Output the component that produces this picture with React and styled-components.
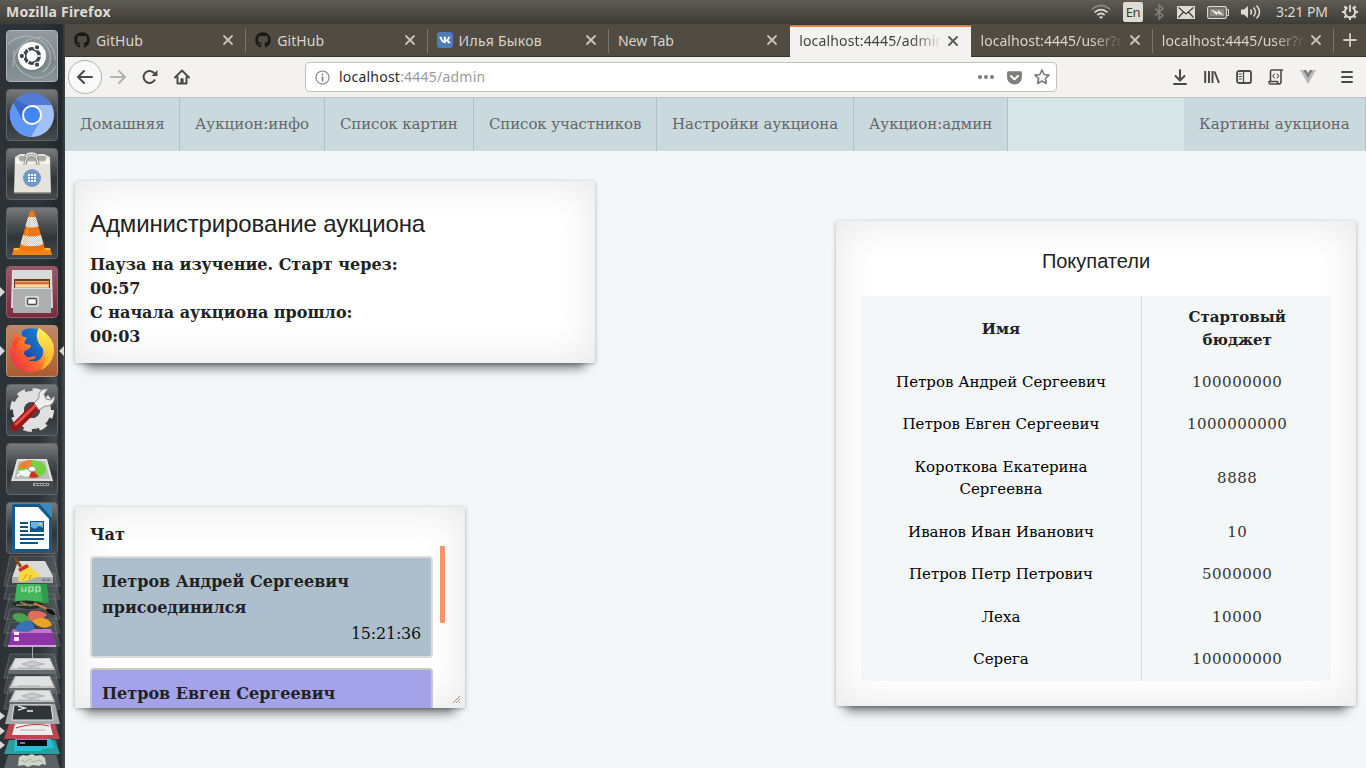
import React from "react";
import styled, { createGlobalStyle, css } from "styled-components";
import { FaGithub, FaVk, FaGetPocket } from "react-icons/fa";

const GlobalStyle = createGlobalStyle`
  * { box-sizing: border-box; }
  body { margin: 0; overflow: hidden; }
`;

const ui = `"Noto Sans", "Open Sans", sans-serif`;
const serif = `"DejaVu Serif", serif`;

const Desktop = styled.div`
  width: 1366px;
  height: 768px;
  display: flex;
  flex-direction: column;
  overflow: hidden;
  font-family: ${ui};
  background: #f3f7f8;
`;

/* ---------- top panel ---------- */
const Panel = styled.header`
  height: 24px;
  flex: none;
  display: flex;
  align-items: center;
  justify-content: space-between;
  padding: 0 7px 0 6px;
  background: linear-gradient(#625f51 0, #5a5850 2px, #3e3c38 100%);
  color: #dfdbd2;
`;
const PanelTitle = styled.span`
  font-size: 14px;
  font-weight: 700;
  line-height: 24px;
  letter-spacing: 0.22px;
`;
const Indicators = styled.div`
  display: flex;
  align-items: center;
  height: 24px;
`;
const Indicator = styled.span`
  display: flex;
  justify-content: center;
  align-items: center;
  width: ${(p) => p.$w}px;
  margin-left: ${(p) => p.$gap || 0}px;
  height: 24px;
`;
const Keyboard = styled.span`
  width: 20px;
  height: 20px;
  margin-left: 12px;
  margin-bottom: 1px;
  border-radius: 2px;
  background: #dfdbd2;
  color: #3c3b37;
  font-size: 13px;
  line-height: 20px;
  text-align: center;
  letter-spacing: -0.5px;
`;
const Clock = styled.span`
  width: 54px;
  margin-left: 15px;
  font-size: 14px;
  line-height: 24px;
  letter-spacing: -0.1px;
  white-space: nowrap;
`;

/* ---------- launcher ---------- */
const Main = styled.div`
  flex: 1;
  display: flex;
  min-height: 0;
`;
const Launcher = styled.aside`
  width: 65px;
  flex: none;
  display: flex;
  flex-direction: column;
  align-items: center;
  padding: 6px 1px 0 0;
  gap: 7px;
  overflow: hidden;
  background:
    linear-gradient(90deg, transparent 60%, rgba(150, 160, 165, 0.28) 86%, rgba(40, 45, 48, 0.6) 91%, rgba(90, 98, 102, 0.5) 100%) 0 330px / 100% 100% no-repeat,
    linear-gradient(90deg, #2c3235 0, #2d3437 60%, #22292c 94%, #3b4244 100%);
`;
const Tile = styled.div`
  position: relative;
  width: 52px;
  height: 52px;
  flex: none;
  border: 1px solid ${(p) => p.$edge || "#5f676b"};
  border-radius: 4px;
  background: ${(p) => p.$bg || "linear-gradient(#777a7b 0, #4a4e50 35%, #303538 60%, #454b4e 100%)"};
  svg { display: block; margin: -1px; }
`;
const Pip = styled.i`
  position: absolute;
  top: 20px;
  border: 5px solid transparent;
  ${(p) =>
    p.$right
      ? css`right: -7px; border-right-color: #d8d8d8; border-left: 0;`
      : css`left: -7px; border-left-color: #d8d8d8; border-right: 0;`}
`;
const Stack = styled.div`
  width: 65px;
  height: 214px;
  margin: -7px -1px 0 0;
  flex: none;
  svg { display: block; }
`;

/* ---------- browser chrome ---------- */
const Browser = styled.main`
  flex: 1;
  min-width: 0;
  display: flex;
  flex-direction: column;
`;
const TabBar = styled.div`
  height: 33px;
  flex: none;
  display: flex;
  background: #504c44;
  border-bottom: 1px solid #37332e;
`;
const TabBox = styled.div`
  position: relative;
  width: 181.3px;
  height: ${(p) => (p.$active ? 33 : 32)}px;
  flex: none;
  display: flex;
  align-items: center;
  padding: 0 12px 0 9px;
  color: ${(p) => (p.$active ? "#45433f" : "#d9d4c9")};
  background: ${(p) => (p.$active ? "#f4f2f0" : "transparent")};
  border-top: ${(p) => (p.$active ? "1px solid #37332e" : "0")};
  box-shadow: ${(p) => (p.$active ? "inset 0 2px #f17a4d" : "none")};
  &::after {
    content: "";
    position: absolute;
    right: 0;
    top: 5px;
    width: 1px;
    height: 24px;
    background: ${(p) => (p.$line ? "#7b776e" : "transparent")};
  }
`;
const TabLabel = styled.span`
  flex: 1;
  min-width: 0;
  margin-left: ${(p) => (p.$icon ? 6 : 0)}px;
  margin-top: ${(p) => (p.$active ? 0 : 1)}px;
  overflow: hidden;
  white-space: nowrap;
  font-size: 14px;
  line-height: 22px;
  letter-spacing: ${(p) => p.$track || 0}px;
  ${(p) => p.$fade && css`mask-image: linear-gradient(90deg, #000 112px, transparent 144px);`}
`;
const Close = styled.svg`
  flex: none;
  margin-left: 5px;
`;
const VkIcon = styled.span`
  width: 16px;
  height: 16px;
  display: flex;
  align-items: center;
  justify-content: center;
  border-radius: 3px;
  background: #4d7db8;
  color: #fff;
`;
const NewTab = styled.div`
  flex: 1;
  display: flex;
  align-items: center;
  justify-content: center;
`;
const Toolbar = styled.div`
  height: 41px;
  flex: none;
  display: flex;
  align-items: center;
  padding: 0 3px;
  background: #f4f2f0;
  border-bottom: 1px solid #c6c3bf;
`;
const ToolButton = styled.span`
  width: 32px;
  height: 32px;
  flex: none;
  display: flex;
  align-items: center;
  justify-content: center;
`;
const BackButton = styled(ToolButton)`
  width: 34px;
  height: 34px;
  border: 1px solid #b3b0ad;
  border-radius: 50%;
  background: #fbfafa;
`;
const Address = styled.div`
  width: 752px;
  height: 30px;
  flex: none;
  margin: 0 107px;
  display: flex;
  align-items: center;
  padding: 0 0 0 9px;
  border: 1px solid #c4c1bd;
  border-radius: 4px;
  background: #fff;
`;
const Url = styled.span`
  flex: 1;
  margin-left: 9px;
  font-size: 14px;
  line-height: 28px;
  color: #9b9b9b;
  letter-spacing: 0.22px;
  b { font-weight: 400; color: #2c2c2c; }
`;
const AddressAction = styled.span`
  width: 28px;
  display: flex;
  justify-content: center;
`;
const Separator = styled.i`
  width: 1px;
  height: 34px;
  margin: 0 4px 0 3px;
  background: #d2d0cd;
`;

/* ---------- web page ---------- */
const Nav = styled.nav`
  height: 53px;
  flex: none;
  display: flex;
  background: #d6e6e6;
`;
const NavItem = styled.a`
  width: ${(p) => p.$w}px;
  height: 53px;
  flex: none;
  padding: 0 0 0 15px;
  border-right: 1px solid #adc1d0;
  background: #cad9de;
  color: #666;
  font-family: ${serif};
  font-size: 15px;
  line-height: 53px;
  white-space: nowrap;
  letter-spacing: ${(p) => p.$track || 0}px;
`;
const NavSpace = styled.div`flex: 1;`;
const Page = styled.div`
  flex: 1;
  display: flex;
  justify-content: space-between;
  align-items: flex-start;
  padding: 30px 10px 0;
  background: #f3f7f8;
  font-family: ${serif};
  color: #222;
`;
const LeftColumn = styled.div`
  display: flex;
  flex-direction: column;
  gap: 144px;
`;
const Card = styled.section`
  background: #fff;
  box-shadow:
    0 15px 10px -10px rgba(0, 0, 0, 0.5),
    0 1px 4px rgba(0, 0, 0, 0.3),
    0 0 40px rgba(0, 0, 0, 0.1) inset;
`;
const AdminCard = styled(Card)`
  width: 520px;
  height: 182px;
  padding: 26px 15px 0;
`;
const Title = styled.h1`
  margin: 0 0 12px;
  font: 400 24px/34px "Liberation Sans", sans-serif;
  letter-spacing: -0.12px;
`;
const Timer = styled.div`
  font-size: 16px;
  font-weight: 700;
  line-height: 24px;
`;
const BuyersCard = styled(Card)`
  width: 520px;
  height: 485px;
  margin-top: 40px;
  padding: 25px;
`;
const Subtitle = styled.h2`
  margin: 0 0 20px;
  font: 400 20px/30px "Liberation Sans", sans-serif;
  text-align: center;
`;
const Table = styled.div`
  background: #f3f7f8;
  font-size: 15px;
  line-height: 22.5px;
  text-align: center;
`;
const Row = styled.div`
  display: grid;
  grid-template-columns: 280px 190px;
  height: ${(p) => (p.$head ? "64.9px" : "auto")};
  font-weight: ${(p) => (p.$head ? 700 : 400)};
`;
const Cell = styled.div`
  display: flex;
  align-items: center;
  justify-content: center;
  padding: ${(p) => (p.$head ? "11.5px 30px 10px" : "10px 30px")};
  color: ${(p) => (p.$head ? "#222" : "#000")};
`;
const Budget = styled(Cell)`
  padding: 10px 30px 10px 31.4px;
  border-left: 1px solid #d5dadb;
  color: ${(p) => (p.$head ? "#222" : "#333")};
  letter-spacing: ${(p) => (p.$head ? 0 : 0.5)}px;
`;
const ChatCard = styled(Card)`
  position: relative;
  width: 390px;
  height: 201px;
  padding: 16px 20px 0 15px;
`;
const ChatTitle = styled.div`
  height: 23px;
  font-size: 16px;
  font-weight: 700;
  line-height: 24px;
`;
const ChatScroll = styled.div`
  height: 162px;
  display: flex;
  justify-content: space-between;
  overflow: hidden;
`;
const Messages = styled.div`
  width: 343px;
  padding-top: 10px;
  display: flex;
  flex-direction: column;
  gap: 10px;
`;
const Message = styled.div`
  flex: none;
  height: 102px;
  padding: 11px 10px 9px;
  border: 2px solid ${(p) => p.$edge};
  border-radius: 4px;
  background: ${(p) => p.$bg};
  font-size: 16px;
  font-weight: 700;
  line-height: 26px;
`;
const Time = styled.div`
  font-weight: 400;
  color: #111;
  letter-spacing: -0.22px;
  text-align: right;
`;
const Thumb = styled.i`
  width: 5px;
  height: 77px;
  border-radius: 1px;
  background: #f5936b;
`;
const Grip = styled.svg`
  position: absolute;
  right: 4px;
  bottom: 4px;
`;

/* ---------- launcher drawings ---------- */
const TileSvg = ({ children }) => (
  <svg width="52" height="52" viewBox="0 0 52 52">{children}</svg>
);

const Dash = () => (
  <TileSvg>
    <g fill="none" stroke="#c3cacc" strokeWidth="1.2" opacity=".6">
      <path d="M2 14C14 2 34 4 42 18c5 10 2 20-6 24" />
      <path d="M7 38C6 22 16 8 34 7c10 3 15 13 15 23" />
      <path d="M8 20c-2 14 6 25 22 28 10 0 16-5 20-12" />
    </g>
    <circle cx="26" cy="27.500" r="14" fill="#58656a" opacity=".5" />
    <circle cx="26" cy="26" r="14" fill="#fff" />
    <circle cx="26" cy="26" r="7.200" fill="none" stroke="#3f4649" strokeWidth="3.600" />
    <g stroke="#fff" strokeWidth="1.300"><path d="M26 26l-7-11M26 26l-7 11M26 26h14" /></g>
    <circle cx="26" cy="26" r="5.400" fill="#fff" />
    <g fill="#3f4649" stroke="#fff" strokeWidth="1.100">
      <circle cx="15.800" cy="26" r="2.700" /><circle cx="31" cy="17.300" r="2.700" /><circle cx="31" cy="34.700" r="2.700" />
    </g>
  </TileSvg>
);

const Chromium = () => (
  <TileSvg>
    <circle cx="26" cy="26" r="22" fill="#a1c1f8" />
    <path d="M26 26L7.500 14A22 22 0 0 0 25 48l9-16z" fill="#5e97f6" />
    <path d="M7.500 14A22 22 0 0 1 45.500 16H26L16 30z" fill="#3e66c5" />
    <path d="M10 11A22 22 0 0 1 45.500 16H20z" fill="#5b83da" opacity=".75" />
    <circle cx="26" cy="26" r="10" fill="#fff" />
    <circle cx="26" cy="26" r="8" fill="#4285f4" />
  </TileSvg>
);

const Software = () => (
  <TileSvg>
    <path d="M9 9l5-3h24l6 3 1 36H8z" fill="#e5e4dc" />
    <path d="M9 13l5-5h25l5 5z" fill="#aaa9a0" />
    <path d="M9 13l3-4 3 6h23l3-6 3 4v3H9z" fill="#f6f5ef" />
    <path d="M8 44h37v1.500H8z" fill="#9d9c94" />
    <path d="M19 17c0-13 13-13 13 0M20 9c0-5 11-5 11 0" fill="none" stroke="#82847f" strokeWidth="3.200" />
    <path d="M19 17c0-13 13-13 13 0M20 9c0-5 11-5 11 0" fill="none" stroke="#e2e4de" strokeWidth="1.400" />
    <circle cx="26" cy="30" r="9" fill="#7097c5" />
    <path d="M22 26h2v2h-2zm3 0h2v2h-2zm3 0h2v2h-2zm-6 3h2v2h-2zm3 0h2v2h-2zm3 0h2v2h-2zm-6 3h2v2h-2zm3 0h2v2h-2zm3 0h2v2h-2z" fill="#fff" />
  </TileSvg>
);

const Vlc = () => (
  <TileSvg>
    <defs>
      <pattern id="mesh" width="2" height="2" patternUnits="userSpaceOnUse">
        <path d="M0 0h2v2H0z" fill="#f2f3f3" /><path d="M0 0h1v1H0zM1 1h1v1H1z" fill="#c3c7c9" />
      </pattern>
    </defs>
    <path d="M8 41h36l2 7H6z" fill="#f58712" />
    <path d="M8 41h36l.5 2h-37z" fill="#ffb040" />
    <path d="M24 4c1-1 3-1 4 0l11 38c-4 4-22 4-26 0z" fill="#ee7510" />
    <path d="M22.200 10h7.600l2.800 9c-4 2-9 2-13.200 0zM17 28c6 2 12 2 18 0l2.400 9c-6 3-17 3-22.800 0z" fill="url(#mesh)" />
    <path d="M25 4l-4 36h-5z" fill="#ffb85c" opacity=".3" />
  </TileSvg>
);

const Files = () => (
  <TileSvg>
    <path d="M6 4h40l1 38H5z" fill="#d9dbda" />
    <path d="M8 13h36v10H8z" fill="#6f3827" />
    <path d="M9 15h34v8H9z" fill="#eab26f" />
    <path d="M9 16h34v2H9z" fill="#ce6d35" />
    <path d="M10 19h32v2H10z" fill="#f6dca6" />
    <path d="M7 22h38v25H7z" fill="#adafaf" />
    <path d="M7 22h38v1H7z" fill="#dedede" />
    <rect x="19" y="30" width="14" height="11" rx="2" fill="#dadada" />
    <rect x="21.500" y="32.500" width="9" height="6" rx="1" fill="#f8f8f8" stroke="#4e4e4e" strokeWidth="1.400" />
  </TileSvg>
);

const Firefox = () => (
  <TileSvg>
    <defs>
      <linearGradient id="fox" x1="1" y1=".1" x2="0" y2=".8">
        <stop offset="0" stopColor="#ffe93f" /><stop offset=".3" stopColor="#ffb52b" />
        <stop offset=".58" stopColor="#ff6a2b" /><stop offset="1" stopColor="#ee2c4c" />
      </linearGradient>
      <linearGradient id="globe" x1="0" y1="1" x2="1" y2="0">
        <stop offset="0" stopColor="#1d3f9c" /><stop offset="1" stopColor="#1190e8" />
      </linearGradient>
      <linearGradient id="flame" x1="0" y1="0" x2="0" y2="1">
        <stop offset="0" stopColor="#fff353" /><stop offset="1" stopColor="#ffa62a" />
      </linearGradient>
    </defs>
    <path d="M16 6c6-4 15-3 19 0l5 12-3 18H16z" fill="url(#globe)" />
    <path d="M7 8c3 1 5 3 6 4 3-1 6 0 8 1-2 2-3 4-2 6l6 1c0 4-4 4-7 7 0 4 3 6 7 5l4-1c1 1 0 4-7 4 7 4 15 0 15-8 1-5-1-9-3-12L45 14c6 13 0 26-11 31C21 51 4 43 4 26c0-5 2-8 4-11-1-2-1-5-1-7z" fill="url(#fox)" />
    <path d="M33 3c8 5 16 12 15 24-1 9-6 15-13 18 4-6 7-13 3-20-6-6-10-15-5-22z" fill="url(#flame)" />
    <path d="M8 15c2-2 4-3 7-2-4 3-7 11-4 18-3-2-5-10-3-16z" fill="#f04438" opacity=".7" />
  </TileSvg>
);

const Settings = () => (
  <TileSvg>
    <circle cx="26" cy="26" r="13.500" fill="none" stroke="#e0e0e0" strokeWidth="11" />
    <circle cx="26" cy="26" r="19.500" fill="none" stroke="#e0e0e0" strokeWidth="5" strokeDasharray="8 7.315" />
    <circle cx="26" cy="26" r="8" fill="#41474a" />
    <path d="M6 40l22-22 6 6-22 22c-5 3-10-2-6-6z" fill="#9e1717" />
    <path d="M8 40l21-20 2 2L10 42z" fill="#e05048" />
    <path d="M28 19l5-5c-1-6 3-10 9-9l-4 5 2 5 5 1 3-4c2 5-3 11-9 10l-6 4z" fill="#eeeeed" stroke="#85898a" />
  </TileSvg>
);

const Disks = () => (
  <TileSvg>
    <path d="M11 16h30l6 22v6H5v-6z" fill="#e1e2e0" />
    <path d="M5 38h42v7H5z" fill="#45494a" />
    <path d="M13 18h26l5 18H8z" fill="#b9bdbb" />
    <ellipse cx="26" cy="26" rx="14" ry="9" fill="#74d23e" />
    <path d="M26 26L12 25c1-5 6-8 13-8z" fill="#f28033" />
    <path d="M26 26l7 8c-4 1-8 1-11 0z" fill="#d92c27" />
    <path d="M26 26l-3 8c-6 0-10-3-11-6z" fill="#f4f4f2" />
    <ellipse cx="26" cy="26" rx="4" ry="2.500" fill="#fff" stroke="#999" />
    <path d="M11 33l10-6" stroke="#fff" strokeWidth="2" />
    <path d="M27 40h16v3H27z" fill="#9b9f9f" />
    <path d="M29 41.500h13" stroke="#333" strokeDasharray="2 1" />
  </TileSvg>
);

const Writer = () => (
  <TileSvg>
    <path d="M6 4q0-2 2-2h26l12 12v34q0 2-2 2H8q-2 0-2-2z" fill="#155a8d" />
    <path d="M34 2h12v14z" fill="#3a8abd" />
    <path d="M9 5h23l11 12v30H9z" fill="#fff" />
    <g fill="#0f5688">
      <path d="M14 20h8v2h-8zm0 4h8v2h-8zm0 4h8v2h-8zm0 4h24v2H14zm0 4h24v2H14zm0 4h18v2H14z" />
      <path d="M24 19h14v11H24z" />
    </g>
    <path d="M25 20h12v6l-4-2-4 3-4-2z" fill="#68b2dd" />
    <circle cx="34.500" cy="22" r="1.300" fill="#ffd24c" />
  </TileSvg>
);

const Folded = () => (
  <svg width="65" height="214" viewBox="0 554 65 214">
    <g fill="#7b8285" fillOpacity=".22" stroke="#90989b" strokeOpacity=".4">
      <path d="M10 556h44l6 30H4zM10 573h44l6 26H4zM10 594h44l6 25H4zM10 609h44l6 24H4zM10 622h44l6 24H4zM10 654h44l6 24H4zM10 666h44l6 27H4zM10 681h44l6 28H4z" />
    </g>
    <path d="M18 561h27l8 15v6H12v-4z" fill="#d9dad9" />
    <path d="M12 577h41v6H12z" fill="#aaadad" />
    <path d="M41 580h10M44 578v4M48 578v4" stroke="#777" />
    <path d="M15 558l8 12" stroke="#8a4a16" strokeWidth="3" />
    <path d="M20 567l7-3 14 12c-8 1-13 7-23 5z" fill="#f6da3d" />
    <path d="M18 569l9-5 2 3-9 5z" fill="#cd3029" />
    <path d="M27 574l-4 6M31 575l-2 5" stroke="#b99512" />
    <path d="M17 584h30l2 19H14z" fill="#2e9b4b" />
    <path d="M17 584h23l3 17H15z" fill="#44b65b" />
    <path d="M22 587v4h4v-4m3 6v-6h4v4h-4m7 2v-6h4v4h-4" fill="none" stroke="#bfe5c4" strokeWidth="1.200" />
    <path d="M12 603c7-4 24-3 31 1l-5 4c-8 2-18 1-26-4z" fill="#25292a" />
    <path d="M16 605h20M20 602l11 4" stroke="#8b8059" strokeWidth="1.500" />
    <path d="M34 603l15 7" stroke="#cb7937" strokeWidth="2" />
    <path d="M46 609c5-1 8 3 10 6-5 0-9-2-10-6z" fill="#0f1213" />
    <path d="M12 629h40l4 18H8z" fill="#8d35a6" />
    <path d="M13 629h38l1 4H12z" fill="#bf78ca" />
    <path d="M14 632h5v3h-5zm0 5h5v4h-5z" fill="#f2e9f4" />
    <path d="M8 645h48v2H8z" fill="#d3a2dc" />
    <path d="M31 621c-3-7-14-11-19-5 3 6 11 9 19 5z" fill="#4aa34c" />
    <path d="M31 621c-6-4-2-12 4-10 5-1 10 2 12 4-3 3-9 7-16 6z" fill="#e26d5a" />
    <path d="M32 621c8-5 17-4 20 4-5 4-13 4-20-4z" fill="#eda229" />
    <path d="M31 621c-9-1-15 4-16 9 6 3 9 1 12 2 5-1 11-3 4-11z" fill="#3971b7" />
    <path d="M32.500 647v17" stroke="#aaa" />
    {[658, 676, 690].map((y) => (
      <g key={y}>
        <path d={`M15 ${y}h35l5 12v4H9v-4z`} fill="#c1c4c4" />
        <path d={`M16 ${y + 1}h33l4 9H12z`} fill="#e0e1e0" />
        <path d={`M9 ${y + 12}h46v4H9z`} fill="#686c6c" />
        <path d={`M18 ${y + 10}h22`} stroke="#a6a9a9" />
      </g>
    ))}
    <path d="M22 664l10-3 12 3-13 3zM22 696l10-3 12 3-13 3z" fill="#c8cbca" stroke="#999" strokeWidth=".6" />
    <path d="M10 704h45l5 20H5z" fill="#a6a9a9" />
    <path d="M14 705h37l2 15H12z" fill="#303537" stroke="#e5e5e5" />
    <path d="M18 706l7 2-7 2M27 711h6" fill="none" stroke="#eee" strokeWidth="1.300" />
    <path d="M9 724h46l5 15H4z" fill="#b94650" />
    <path d="M15 724h35l3 11H12z" fill="#eeeded" />
    <path d="M20 730h25" stroke="#d9bcbc" strokeWidth="1.500" />
    <path d="M16 728c9-3 22-5 33-2" fill="none" stroke="#c52e35" />
    <path d="M9 740h46l5 14H4z" fill="#2c9c9e" />
    <path d="M15 739h36l3 9-12 1-1 2H14z" fill="#22c2d7" />
    <path d="M17 740h30v6H17z" fill="#080c0d" />
    <path d="M20 743h5" stroke="#eee" />
    <path d="M8 755h48l4 13H4z" fill="#5a6265" />
    <path d="M19 757l4-2 4 1 5-2 4 2 5-1 4 3 1 7-4-1-3 2-6-1-5 2-4-2-6 1z" fill="#d0d3c8" />
    <path d="M21 760l4 2 5-3 4 3 5-2 4 2" fill="none" stroke="#a8ada4" />
    <path d="M0 712l5 4-5 4zM0 727l5 4-5 4zM0 741l5 4-5 4z" fill="#d8d8d8" />
  </svg>
);

/* ---------- small line icons ---------- */
const Line = ({ children, size = 16, color = "#4c4a48", width = 2 }) => (
  <svg width={size} height={size} viewBox="0 0 16 16" fill="none" stroke={color} strokeWidth={width} strokeLinecap="round" strokeLinejoin="round">
    {children}
  </svg>
);
const CloseIcon = ({ dark }) => (
  <Close width="12" height="12" viewBox="0 0 12 12">
    <path d="M2 2l8 8M10 2l-8 8" stroke={dark ? "#5b5956" : "#c9c5bb"} strokeWidth="1.800" strokeLinecap="round" />
  </Close>
);

const tabs = [
  { label: "GitHub", icon: "github", line: true, track: 0.05 },
  { label: "GitHub", icon: "github", line: true, track: 0.05 },
  { label: "Илья Быков", icon: "vk", line: true, track: 0.3 },
  { label: "New Tab" },
  { label: "localhost:4445/admin", active: true, fade: true, track: 0.16 },
  { label: "localhost:4445/user?n", line: true, fade: true, track: 0.05 },
  { label: "localhost:4445/user?n", line: true, fade: true, track: 0.05 },
];

const navItems = [
  ["Домашняя", 115, 0],
  ["Аукцион:инфо", 145, 0],
  ["Список картин", 149, -0.12],
  ["Список участников", 183, -0.12],
  ["Настройки аукциона", 197, 0],
  ["Аукцион:админ", 154, 0],
];

const buyers = [
  ["Петров Андрей Сергеевич", "100000000"],
  ["Петров Евген Сергеевич", "1000000000"],
  ["Короткова Екатерина Сергеевна", "8888"],
  ["Иванов Иван Иванович", "10"],
  ["Петров Петр Петрович", "5000000"],
  ["Леха", "10000"],
  ["Серега", "100000000"],
];

const TopPanel = () => (
  <Panel>
    <PanelTitle>Mozilla Firefox</PanelTitle>
    <Indicators>
      <Indicator $w={20}>
        <svg width="20" height="16" viewBox="0 0 20 16" fill="none" strokeWidth="1.700">
          <path d="M.8 5.500q9.200-8 18.400 0" stroke="#88857d" />
          <path d="M3.500 8.300q6.500-5.500 13 0M6.300 11q3.700-3 7.400 0" stroke="#dfdbd2" />
          <path d="M8 13q2-1.500 4 0l-2 2z" fill="#dfdbd2" />
        </svg>
      </Indicator>
      <Keyboard>En</Keyboard>
      <Indicator $w={12} $gap={10}>
        <svg width="10" height="16" viewBox="0 0 10 16" fill="none" stroke="#8a877f" strokeWidth="1.300"><path d="M1 4.500l8 7L5 15V1l4 3.500-8 7" /></svg>
      </Indicator>
      <Indicator $w={18} $gap={12}>
        <svg width="18" height="13" viewBox="0 0 18 13"><path d="M0 0h18v13H0z" fill="#dfdbd2" /><path d="M1.500 1.500L9 8l7.500-6.500M1.500 11.500L6.500 6M16.500 11.500l-5-5.500" fill="none" stroke="#45433e" strokeWidth="1.300" /></svg>
      </Indicator>
      <Indicator $w={22} $gap={12}>
        <svg width="22" height="13" viewBox="0 0 22 13"><rect x=".7" y=".7" width="18.600" height="11.600" rx="1.500" fill="none" stroke="#dfdbd2" strokeWidth="1.300" /><path d="M2.500 2.500h15v8h-15z" fill="#8d8a83" /><path d="M20 3.500h1.500v6H20" fill="none" stroke="#dfdbd2" /><path d="M3.500 3.500L11 6.500V4l6 5.500-7-2.300v2z" fill="#f4f1ea" /></svg>
      </Indicator>
      <Indicator $w={20} $gap={12}>
        <svg width="20" height="16" viewBox="0 0 20 16" fill="none" stroke="#dfdbd2" strokeWidth="1.500"><path d="M0 5.500h3L7 2v12L3 10.500H0z" fill="#dfdbd2" stroke="none" /><path d="M9.500 5.500q2 2.500 0 5M12.500 3.500q4 4.500 0 9" /><path d="M15.500 1.500q6 6.500 0 13" /></svg>
      </Indicator>
      <Clock>3:21 PM</Clock>
      <Indicator $w={18} $gap={11}>
        <svg width="18" height="18" viewBox="0 0 18 18" fill="none" stroke="#dfdbd2">
          <path d="M6.500 4.400a5.200 5.200 0 1 0 5 0" strokeWidth="2" />
          <path d="M9 2v7" strokeWidth="1.800" />
          <path d="M1 9h3M14 9h3M9 14v3M3.300 3.300l2 2M12.700 5.300l2-2M3.300 14.700l2-2M12.700 12.700l2 2" strokeWidth="2" />
        </svg>
      </Indicator>
    </Indicators>
  </Panel>
);

const Dock = () => (
  <Launcher>
    <Tile $bg="linear-gradient(#929b9e, #7b868b 60%, #899498)" $edge="#aeb5b7"><Dash /></Tile>
    <Tile><Chromium /></Tile>
    <Tile><Software /></Tile>
    <Tile><Vlc /></Tile>
    <Tile $bg="linear-gradient(#96586a, #7a2b3d)" $edge="#a05b68"><Files /><Pip /></Tile>
    <Tile $bg="linear-gradient(#bd8a68, #ab5c30)" $edge="#c58c68"><Firefox /><Pip /><Pip $right /></Tile>
    <Tile><Settings /></Tile>
    <Tile><Disks /></Tile>
    <Tile><Writer /></Tile>
    <Stack><Folded /></Stack>
  </Launcher>
);

const Tabs = () => (
  <TabBar>
    {tabs.map((t, i) => (
      <TabBox key={i} $active={t.active} $line={t.line}>
        {t.icon === "github" && <FaGithub size={16} color="#191817" />}
        {t.icon === "vk" && <VkIcon><FaVk size={12} /></VkIcon>}
        <TabLabel $icon={t.icon} $active={t.active} $fade={t.fade} $track={t.track}>{t.label}</TabLabel>
        <CloseIcon dark={t.active} />
      </TabBox>
    ))}
    <NewTab><Line size={16} color="#d0ccc2" width={1.8}><path d="M8 2v12M2 8h12" /></Line></NewTab>
  </TabBar>
);

const Tools = () => (
  <Toolbar>
    <BackButton><Line><path d="M15 8H1.500M7 2L1 8l6 6" /></Line></BackButton>
    <ToolButton><Line color="#b5b3b0"><path d="M1 8h13.500M9 2l6 6-6 6" /></Line></ToolButton>
    <ToolButton>
      <Line><path d="M13 10.500A6 6 0 1 1 12.500 4.500" strokeLinecap="butt" /><path d="M15.500 1V7H9.500z" fill="#4c4a48" stroke="none" /></Line>
    </ToolButton>
    <ToolButton>
      <Line><path d="M1 8.500L8 1.500l7 7M3.500 8v6.500h9V8" /><path d="M7.200 14V10h1.600v4" strokeWidth="1.600" /></Line>
    </ToolButton>
    <Address>
      <Line size={15} color="#858381" width={1.2}><circle cx="8" cy="8" r="7" /><path d="M8 7.500v4M8 4.500v.4" strokeWidth="1.800" /></Line>
      <Url><b>localhost</b>:4445/admin</Url>
      <AddressAction><svg width="16" height="16" viewBox="0 0 16 16" fill="#7e7c7a"><circle cx="2" cy="8" r="2" /><circle cx="8" cy="8" r="2" /><circle cx="14" cy="8" r="2" /></svg></AddressAction>
      <AddressAction><FaGetPocket size={17} color="#807e7c" /></AddressAction>
      <AddressAction><Line color="#7e7c7a" width={1.7}><path d="M8 1l2.100 4.500 4.900.6-3.600 3.400.9 5L8 12l-4.300 2.500.9-5L1 6.100l4.900-.6z" /></Line></AddressAction>
    </Address>
    <ToolButton><Line><path d="M8 1v10M3.500 7L8 11.500 12.500 7M2 15h12" /></Line></ToolButton>
    <ToolButton><Line><path d="M1.200 2v12M5 2v12M8.500 2v12M10.500 2.500l4.500 11.500" strokeLinecap="butt" /></Line></ToolButton>
    <ToolButton><Line width={1.8}><rect x="1" y="2" width="14" height="12" rx="2" /><path d="M7.500 2v12" strokeWidth="1.300" /><path d="M3 5h2.500M3 7.500h2.500M3 10h2.500" strokeWidth="1" /></Line></ToolButton>
    <ToolButton><Line width={1.6}><path d="M2.500 12V2.500Q2.500 1 4 1h10.500Q13 1 13 3v9.500Q13 15 11 15H2.500Q1 15 1 12.500h8.500Q9.500 15 11 15" /><path d="M6.500 5L4.700 7l1.800 2M9 5l1.800 2L9 9" strokeWidth="1.100" /></Line></ToolButton>
    <ToolButton><svg width="16" height="14" viewBox="0 0 16 14"><path d="M0 0h3.200L8 8.400 12.800 0H16L8 14z" fill="#b9b9b9" /><path d="M3.200 0h3L8 3.200 9.800 0h3L8 8.400z" fill="#7d7d7d" /></svg></ToolButton>
    <Separator />
    <ToolButton><Line><path d="M3 3h10M3 8h10M3 13h10" /></Line></ToolButton>
  </Toolbar>
);

const Buyers = () => (
  <BuyersCard>
    <Subtitle>Покупатели</Subtitle>
    <Table>
      <Row $head>
        <Cell $head>Имя</Cell>
        <Budget $head>Стартовый бюджет</Budget>
      </Row>
      {buyers.map(([name, sum]) => (
        <Row key={name}>
          <Cell>{name}</Cell>
          <Budget>{sum}</Budget>
        </Row>
      ))}
    </Table>
  </BuyersCard>
);

const Chat = () => (
  <ChatCard>
    <ChatTitle>Чат</ChatTitle>
    <ChatScroll>
      <Messages>
        <Message $bg="#adbfcd" $edge="#dcdcdc">
          Петров Андрей Сергеевич присоединился
          <Time>15:21:36</Time>
        </Message>
        <Message $bg="#a4a3e9" $edge="#c8c8c8">Петров Евген Сергеевич</Message>
      </Messages>
      <Thumb />
    </ChatScroll>
    <Grip width="9" height="9" viewBox="0 0 9 9" stroke="#a09273"><path d="M1 8l7-7M4 8l4-4M7 8l1-1" /></Grip>
  </ChatCard>
);

export default function App() {
  return (
    <Desktop>
      <GlobalStyle />
      <TopPanel />
      <Main>
        <Dock />
        <Browser>
          <Tabs />
          <Tools />
          <Nav>
            {navItems.map(([label, w, track]) => <NavItem key={label} $w={w} $track={track}>{label}</NavItem>)}
            <NavSpace />
            <NavItem $w={182} $track={0.06}>Картины аукциона</NavItem>
          </Nav>
          <Page>
            <LeftColumn>
              <AdminCard>
                <Title>Администрирование аукциона</Title>
                <Timer>Пауза на изучение. Старт через:</Timer>
                <Timer>00:57</Timer>
                <Timer>С начала аукциона прошло:</Timer>
                <Timer>00:03</Timer>
              </AdminCard>
              <Chat />
            </LeftColumn>
            <Buyers />
          </Page>
        </Browser>
      </Main>
    </Desktop>
  );
}
